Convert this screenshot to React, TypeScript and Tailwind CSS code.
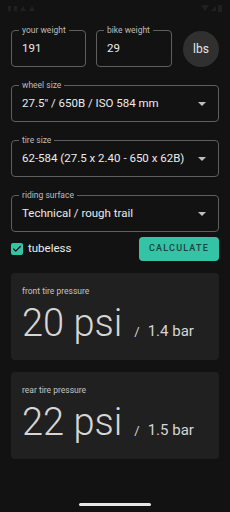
import { Check } from "lucide-react";

const Outlined = ({
  label,
  value,
  select,
  className,
}: {
  label: string;
  value: string;
  select?: boolean;
  className?: string;
}) => {
  return (
    <div
      className={`relative h-[37px] rounded-[4px] border border-[#5f5f5f] flex items-center pl-[10px] pr-[12px] ${className ?? ""}`}
    >
      <span className="absolute -top-[6px] left-[7px] px-[3px] bg-[#121212] text-[8.5px] leading-[10px] text-[#bdbdbd]">
        {label}
      </span>
      <span className="flex-1 text-[11.5px] text-[#ececec] whitespace-nowrap">{value}</span>
      {select && (
        <span className="w-0 h-0 border-l-[4px] border-r-[4px] border-t-[4px] border-l-transparent border-r-transparent border-t-[#bdbdbd]" />
      )}
    </div>
  );
};

const PressureCard = ({
  label,
  psi,
  bar,
}: {
  label: string;
  psi: string;
  bar: string;
}) => {
  return (
    <div className="h-[87px] rounded-[4px] bg-[#202020] px-[11px] pt-[12px]">
      <div className="text-[8.5px] text-[#c4c4c4]">{label}</div>
      <div className="flex items-baseline mt-[2px] text-[#d6d6d6]">
        <span className="text-[38px] font-light leading-[46px]">{psi} psi</span>
        <span className="text-[13px] ml-[12px]">/</span>
        <span className="text-[15px] ml-[8px]">{bar} bar</span>
      </div>
    </div>
  );
};

export default function App() {
  return (
    <div
      className="w-[230px] h-[512px] bg-[#121212] flex flex-col overflow-hidden"
      style={{ fontFamily: "Roboto, 'Noto Sans', sans-serif" }}
    >
      <div className="h-[16px] flex items-center justify-between px-[8px]">
        <div className="flex items-center gap-[3px]">
          <span className="w-[3px] h-[5px] bg-[#202020]" />
          <span className="w-[3px] h-[5px] bg-[#202020]" />
          <span className="w-0 h-0 border-l-[3px] border-r-[3px] border-b-[5px] border-l-transparent border-r-transparent border-b-[#202020]" />
          <span className="w-0 h-0 border-l-[3px] border-r-[3px] border-b-[5px] border-l-transparent border-r-transparent border-b-[#202020]" />
        </div>
        <div className="flex items-center gap-[2px]">
          <span className="w-0 h-0 border-l-[4px] border-r-[4px] border-t-[6px] border-l-transparent border-r-transparent border-t-[#202020]" />
          <span className="w-0 h-0 border-l-[5px] border-b-[5px] border-l-transparent border-b-[#202020]" />
          <span className="w-[4px] h-[7px] bg-[#202020]" />
        </div>
      </div>

      <div className="px-[11px] pt-[14px] flex flex-col">
        <div className="flex items-center gap-[10px]">
          <Outlined label="your weight" value="191" className="w-[75px]" />
          <Outlined label="bike weight" value="29" className="w-[76px]" />
          <div className="ml-auto w-[36px] h-[36px] rounded-full bg-[#303030] flex items-center justify-center text-[12px] text-[#e6e6e6]">
            lbs
          </div>
        </div>

        <Outlined label="wheel size" value={'27.5" / 650B / ISO 584 mm'} select className="mt-[18px]" />
        <Outlined label="tire size" value="62-584 (27.5 x 2.40 - 650 x 62B)" select className="mt-[18px]" />
        <Outlined label="riding surface" value="Technical / rough trail" select className="mt-[18px]" />

        <div className="flex items-center justify-between mt-[5px]">
          <div className="flex items-center gap-[5px]">
            <span className="w-[12px] h-[12px] rounded-[2px] bg-[#35c3a6] flex items-center justify-center">
              <Check size={10} strokeWidth={3} color="#121212" />
            </span>
            <span className="text-[11.5px] text-[#ececec]">tubeless</span>
          </div>
          <button className="w-[80px] h-[24px] rounded-[4px] bg-[#35c3a6] text-[9px] font-medium tracking-[1.2px] text-[#17463c]">
            CALCULATE
          </button>
        </div>

        <div className="mt-[12px] flex flex-col gap-[12px]">
          <PressureCard label="front tire pressure" psi="20" bar="1.4" />
          <PressureCard label="rear tire pressure" psi="22" bar="1.5" />
        </div>
      </div>

      <div className="mt-auto mb-[6px] mx-auto w-[72px] h-[3px] rounded-full bg-[#e6e6e6]" />
    </div>
  );
}
